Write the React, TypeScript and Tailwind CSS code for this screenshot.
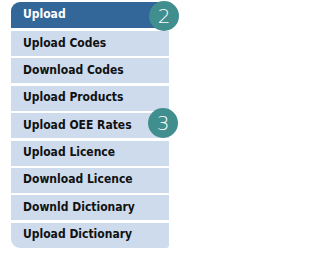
import React from "react";

const items = [
  "Upload Codes",
  "Download Codes",
  "Upload Products",
  "Upload OEE Rates",
  "Upload Licence",
  "Download Licence",
  "Downld Dictionary",
  "Upload Dictionary",
];

function Badge({ n }: { n: string }) {
  return (
    <div className="absolute w-[30px] h-[30px] rounded-full bg-[#418e8e] text-white flex items-center justify-center text-[20px] leading-none font-['DejaVu_Sans',sans-serif] font-light">
      {n}
    </div>
  );
}

export default function App() {
  return (
    <div className="w-[204px] h-[253px] bg-white relative font-['DejaVu_Sans_Condensed','DejaVu_Sans',sans-serif]">
      <div className="pt-[2px] pl-[11px] w-[169px]">
        <div className="relative">
          <div className="h-[26px] bg-[#336699] rounded-tl-[9px] text-white font-bold text-[12px] flex items-center pl-[12px] pb-[3px]">
            Upload
          </div>
          <div className="absolute right-[-10px] top-[-1px]">
            <div className="relative w-[30px] h-[30px]">
              <Badge n="2" />
            </div>
          </div>
        </div>
        <div className="mt-[3px] flex flex-col gap-[2.4px]">
          {items.map((t, i) => (
            <div
              key={t}
              className={`relative h-[25px] bg-[#cddbec] text-[#111] font-bold text-[12px] flex items-center pl-[12px] pb-[2px] ${
                i === items.length - 1 ? "rounded-bl-[9px] rounded-br-[3px]" : ""
              }`}
            >
              {t}
              {t === "Upload OEE Rates" && (
                <div className="absolute right-[-9px] top-[-5px]">
                  <div className="relative w-[30px] h-[30px]">
                    <Badge n="3" />
                  </div>
                </div>
              )}
            </div>
          ))}
        </div>
      </div>
    </div>
  );
}
